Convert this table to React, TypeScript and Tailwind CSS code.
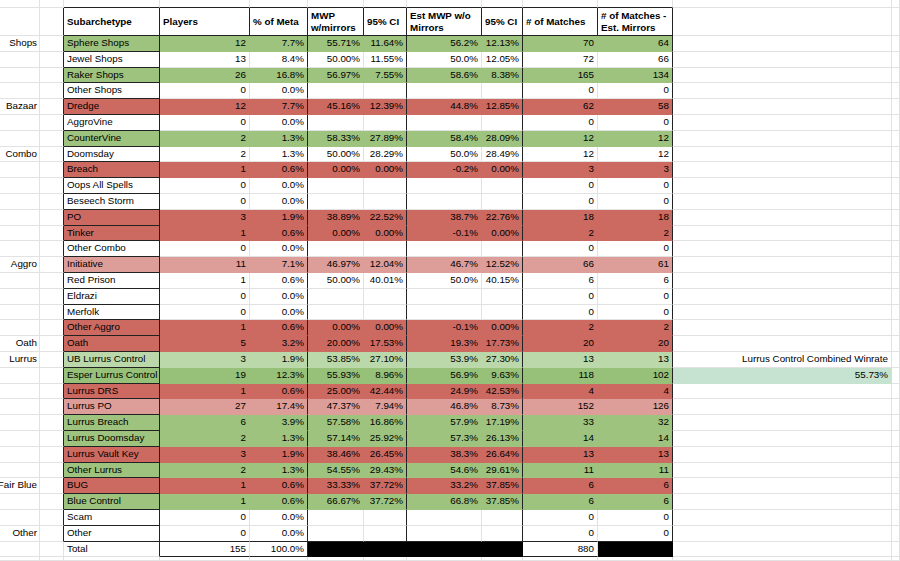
import React from 'react';

type FillKey = 'w' | 'g' | 'r' | 'p' | 'l' | 'd' | 'k' | 't';

// full class strings per fill so tailwind picks them up
const FILL: Record<FillKey, { bg: string; r: string; b: string }> = {
  w: { bg: 'bg-white', r: 'border-r-[#e2e2e2]', b: 'border-b-[#e2e2e2]' },
  g: { bg: 'bg-[#9dc37e]', r: 'border-r-[#9dc37e]', b: 'border-b-[#9dc37e]' },
  r: { bg: 'bg-[#cc6a62]', r: 'border-r-[#cc6a62]', b: 'border-b-[#cc6a62]' },
  p: { bg: 'bg-[#dd9d98]', r: 'border-r-[#dd9d98]', b: 'border-b-[#dd9d98]' },
  l: { bg: 'bg-[#bad8aa]', r: 'border-r-[#bad8aa]', b: 'border-b-[#bad8aa]' },
  d: { bg: 'bg-[#97c079]', r: 'border-r-[#97c079]', b: 'border-b-[#97c079]' },
  k: { bg: 'bg-black', r: 'border-r-black', b: 'border-b-black' },
  t: { bg: 'bg-[#c5e3d0]', r: 'border-r-[#c5e3d0]', b: 'border-b-[#c5e3d0]' },
};

function Cell({
  fill = 'w',
  darkR = false,
  darkB = false,
  align = 'left',
  bold = false,
  tight = false,
  children,
}: {
  fill?: FillKey;
  darkR?: boolean;
  darkB?: boolean;
  align?: 'left' | 'right';
  bold?: boolean;
  tight?: boolean;
  children?: React.ReactNode;
}) {
  const f = FILL[fill];
  return (
    <div
      className={[
        'flex items-center whitespace-nowrap border-r border-b min-w-0',
        tight ? 'pl-[3px] pr-[2px]' : 'px-[3px]',
        f.bg,
        darkR ? 'border-r-[#222]' : f.r,
        darkB ? 'border-b-[#222]' : f.b,
        align === 'right' ? 'justify-end' : 'justify-start',
        bold ? 'font-bold leading-[12px]' : '',
      ].join(' ')}
    >
      {children}
    </div>
  );
}

type Row = {
  group?: string;
  name: string;
  players: number;
  meta: string;
  mwp?: string;
  ci?: string;
  est?: string;
  ci2?: string;
  matches: number;
  noMirror: number;
  fill: FillKey;
};

const rows: Row[] = [
  { group: 'Shops', name: 'Sphere Shops', players: 12, meta: '7.7%', mwp: '55.71%', ci: '11.64%', est: '56.2%', ci2: '12.13%', matches: 70, noMirror: 64, fill: 'g' },
  { name: 'Jewel Shops', players: 13, meta: '8.4%', mwp: '50.00%', ci: '11.55%', est: '50.0%', ci2: '12.05%', matches: 72, noMirror: 66, fill: 'w' },
  { name: 'Raker Shops', players: 26, meta: '16.8%', mwp: '56.97%', ci: '7.55%', est: '58.6%', ci2: '8.38%', matches: 165, noMirror: 134, fill: 'g' },
  { name: 'Other Shops', players: 0, meta: '0.0%', matches: 0, noMirror: 0, fill: 'w' },
  { group: 'Bazaar', name: 'Dredge', players: 12, meta: '7.7%', mwp: '45.16%', ci: '12.39%', est: '44.8%', ci2: '12.85%', matches: 62, noMirror: 58, fill: 'r' },
  { name: 'AggroVine', players: 0, meta: '0.0%', matches: 0, noMirror: 0, fill: 'w' },
  { name: 'CounterVine', players: 2, meta: '1.3%', mwp: '58.33%', ci: '27.89%', est: '58.4%', ci2: '28.09%', matches: 12, noMirror: 12, fill: 'g' },
  { group: 'Combo', name: 'Doomsday', players: 2, meta: '1.3%', mwp: '50.00%', ci: '28.29%', est: '50.0%', ci2: '28.49%', matches: 12, noMirror: 12, fill: 'w' },
  { name: 'Breach', players: 1, meta: '0.6%', mwp: '0.00%', ci: '0.00%', est: '-0.2%', ci2: '0.00%', matches: 3, noMirror: 3, fill: 'r' },
  { name: 'Oops All Spells', players: 0, meta: '0.0%', matches: 0, noMirror: 0, fill: 'w' },
  { name: 'Beseech Storm', players: 0, meta: '0.0%', matches: 0, noMirror: 0, fill: 'w' },
  { name: 'PO', players: 3, meta: '1.9%', mwp: '38.89%', ci: '22.52%', est: '38.7%', ci2: '22.76%', matches: 18, noMirror: 18, fill: 'r' },
  { name: 'Tinker', players: 1, meta: '0.6%', mwp: '0.00%', ci: '0.00%', est: '-0.1%', ci2: '0.00%', matches: 2, noMirror: 2, fill: 'r' },
  { name: 'Other Combo', players: 0, meta: '0.0%', matches: 0, noMirror: 0, fill: 'w' },
  { group: 'Aggro', name: 'Initiative', players: 11, meta: '7.1%', mwp: '46.97%', ci: '12.04%', est: '46.7%', ci2: '12.52%', matches: 66, noMirror: 61, fill: 'p' },
  { name: 'Red Prison', players: 1, meta: '0.6%', mwp: '50.00%', ci: '40.01%', est: '50.0%', ci2: '40.15%', matches: 6, noMirror: 6, fill: 'w' },
  { name: 'Eldrazi', players: 0, meta: '0.0%', matches: 0, noMirror: 0, fill: 'w' },
  { name: 'Merfolk', players: 0, meta: '0.0%', matches: 0, noMirror: 0, fill: 'w' },
  { name: 'Other Aggro', players: 1, meta: '0.6%', mwp: '0.00%', ci: '0.00%', est: '-0.1%', ci2: '0.00%', matches: 2, noMirror: 2, fill: 'r' },
  { group: 'Oath', name: 'Oath', players: 5, meta: '3.2%', mwp: '20.00%', ci: '17.53%', est: '19.3%', ci2: '17.73%', matches: 20, noMirror: 20, fill: 'r' },
  { group: 'Lurrus', name: 'UB Lurrus Control', players: 3, meta: '1.9%', mwp: '53.85%', ci: '27.10%', est: '53.9%', ci2: '27.30%', matches: 13, noMirror: 13, fill: 'l' },
  { name: 'Esper Lurrus Control', players: 19, meta: '12.3%', mwp: '55.93%', ci: '8.96%', est: '56.9%', ci2: '9.63%', matches: 118, noMirror: 102, fill: 'd' },
  { name: 'Lurrus DRS', players: 1, meta: '0.6%', mwp: '25.00%', ci: '42.44%', est: '24.9%', ci2: '42.53%', matches: 4, noMirror: 4, fill: 'r' },
  { name: 'Lurrus PO', players: 27, meta: '17.4%', mwp: '47.37%', ci: '7.94%', est: '46.8%', ci2: '8.73%', matches: 152, noMirror: 126, fill: 'p' },
  { name: 'Lurrus Breach', players: 6, meta: '3.9%', mwp: '57.58%', ci: '16.86%', est: '57.9%', ci2: '17.19%', matches: 33, noMirror: 32, fill: 'g' },
  { name: 'Lurrus Doomsday', players: 2, meta: '1.3%', mwp: '57.14%', ci: '25.92%', est: '57.3%', ci2: '26.13%', matches: 14, noMirror: 14, fill: 'g' },
  { name: 'Lurrus Vault Key', players: 3, meta: '1.9%', mwp: '38.46%', ci: '26.45%', est: '38.3%', ci2: '26.64%', matches: 13, noMirror: 13, fill: 'r' },
  { name: 'Other Lurrus', players: 2, meta: '1.3%', mwp: '54.55%', ci: '29.43%', est: '54.6%', ci2: '29.61%', matches: 11, noMirror: 11, fill: 'g' },
  { group: 'Fair Blue', name: 'BUG', players: 1, meta: '0.6%', mwp: '33.33%', ci: '37.72%', est: '33.2%', ci2: '37.85%', matches: 6, noMirror: 6, fill: 'r' },
  { name: 'Blue Control', players: 1, meta: '0.6%', mwp: '66.67%', ci: '37.72%', est: '66.8%', ci2: '37.85%', matches: 6, noMirror: 6, fill: 'g' },
  { name: 'Scam', players: 0, meta: '0.0%', matches: 0, noMirror: 0, fill: 'w' },
  { group: 'Other', name: 'Other', players: 0, meta: '0.0%', matches: 0, noMirror: 0, fill: 'w' },
];

export default function App() {
  return (
    <div className="w-[900px] h-[561px] overflow-hidden bg-white text-black text-[9.8px] font-['Liberation_Sans',Arial,sans-serif]">
      <div className="grid h-[561px] grid-cols-[40px_24px_96px_90px_58px_56px_43px_75px_41px_75px_75px_219px_1fr] grid-rows-[8px_28px_repeat(33,15.8px)_1fr]">
        {/* row above header */}
        <Cell />
        <Cell />
        <Cell darkB />
        <Cell darkB />
        <Cell darkB />
        <Cell darkB />
        <Cell darkB />
        <Cell darkB />
        <Cell darkB />
        <Cell darkB />
        <Cell darkB />
        <Cell />
        <Cell />

        {/* header */}
        <Cell />
        <Cell darkR />
        <Cell darkR darkB bold>Subarchetype</Cell>
        <Cell darkR darkB bold>Players</Cell>
        <Cell darkR darkB bold>% of Meta</Cell>
        <Cell darkR darkB bold>
          <span>MWP<br />w/mirrors</span>
        </Cell>
        <Cell darkR darkB bold>95% CI</Cell>
        <Cell darkR darkB bold>
          <span>Est MWP w/o<br />Mirrors</span>
        </Cell>
        <Cell darkR darkB bold>95% CI</Cell>
        <Cell darkR darkB bold># of Matches</Cell>
        <Cell darkR darkB bold>
          <span># of Matches -<br />Est. Mirrors</span>
        </Cell>
        <Cell />
        <Cell />

        {rows.map((row, i) => {
          const last = i === rows.length - 1;
          const f = row.fill;
          return (
            <React.Fragment key={row.name + i}>
              <Cell align="right" tight>{row.group}</Cell>
              <Cell darkR />
              <Cell fill={f} darkR darkB>{row.name}</Cell>
              <Cell fill={f} darkB={last} align="right">{row.players}</Cell>
              <Cell fill={f} darkR darkB={last} align="right">{row.meta}</Cell>
              <Cell fill={f} darkB={last} align="right">{row.mwp}</Cell>
              <Cell fill={f} darkR darkB={last} align="right">{row.ci}</Cell>
              <Cell fill={f} darkB={last} align="right">{row.est}</Cell>
              <Cell fill={f} darkR darkB={last} align="right">{row.ci2}</Cell>
              <Cell fill={f} darkB={last} align="right">{row.matches}</Cell>
              <Cell fill={f} darkR darkB={last} align="right">{row.noMirror}</Cell>
              {i === 20 ? (
                <Cell align="right">Lurrus Control Combined Winrate</Cell>
              ) : i === 21 ? (
                <Cell fill="t" align="right">55.73%</Cell>
              ) : (
                <Cell />
              )}
              <Cell />
            </React.Fragment>
          );
        })}

        {/* total */}
        <Cell />
        <Cell />
        <Cell darkR>Total</Cell>
        <Cell darkB align="right">155</Cell>
        <Cell darkR darkB align="right">100.0%</Cell>
        <Cell fill="k" />
        <Cell fill="k" />
        <Cell fill="k" />
        <Cell fill="k" />
        <Cell darkB align="right">880</Cell>
        <Cell fill="k" />
        <Cell />
        <Cell />

        {/* partial row below */}
        <Cell />
        <Cell />
        <Cell />
        <Cell />
        <Cell />
        <Cell />
        <Cell />
        <Cell />
        <Cell />
        <Cell />
        <Cell />
        <Cell />
        <Cell />
      </div>
    </div>
  );
}
